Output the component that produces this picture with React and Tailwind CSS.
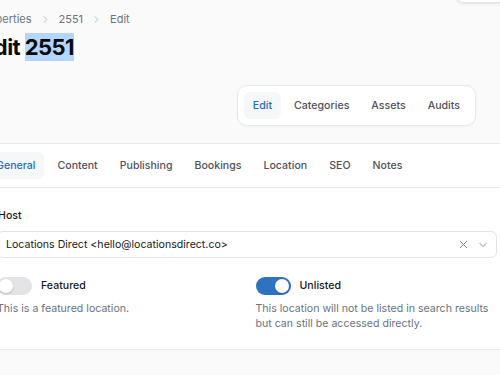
import { X, ChevronDown, ChevronRight } from 'lucide-react';

const subnav = ['Edit', 'Categories', 'Assets', 'Audits'];
const tabs = ['General', 'Content', 'Publishing', 'Bookings', 'Location', 'SEO', 'Notes'];

function Toggle({ on }) {
    return (
        <span
            className={
                on
                    ? 'flex h-[18px] w-[35px] shrink-0 items-center justify-end rounded-full bg-[#2f72bf] px-[2px]'
                    : 'flex h-[18px] w-[35px] shrink-0 items-center justify-start rounded-full bg-[#e4e4e7] px-[2px]'
            }
        >
            <span className="h-[14px] w-[14px] rounded-full bg-white shadow-[0_1px_2px_rgba(0,0,0,0.2)]" />
        </span>
    );
}

function Pill({ label, active }) {
    return (
        <span
            className={
                active
                    ? 'flex h-[27px] items-center rounded-md bg-[#f6f7f9] px-[9px] font-medium text-[#1f6cc0]'
                    : 'flex h-[27px] items-center rounded-md px-[9px] font-medium text-[#52525b]'
            }
        >
            {label}
        </span>
    );
}

export default function App() {
    return (
        <div className="relative h-[375px] w-[500px] overflow-hidden bg-[#fafafa] font-['Inter',sans-serif] text-[10.6px] text-[#18181b]">
            {/* user menu peeking in from the top */}
            <div className="absolute right-[-6px] top-[-41px] h-[43px] w-[50px] rounded-lg bg-white shadow-[0_1px_4px_rgba(0,0,0,0.15)]" />

            <div className="ml-[-22px] pt-[11px]">
                <nav className="flex h-4 items-center gap-[8px] text-[11px] text-[#6b7280]">
                    <span>Properties</span>
                    <ChevronRight size={11} strokeWidth={1.6} className="text-[#9ca3af]" />
                    <span>2551</span>
                    <ChevronRight size={11} strokeWidth={1.6} className="text-[#9ca3af]" />
                    <span>Edit</span>
                </nav>
                <h1 className="ml-[3px] mt-[6px] text-[22px] font-bold leading-[28px] tracking-tight text-[#0a0a0a]">
                    Edit <span className="bg-[#b4d5fe] py-[1px]">2551</span>
                </h1>
            </div>

            <div className="mt-[24px] flex justify-end pr-[24px]">
                <div className="flex gap-1 rounded-[10px] border border-[#e5e7eb] bg-white p-[6px] shadow-[0_1px_2px_rgba(0,0,0,0.03)]">
                    {subnav.map((s, i) => (
                        <Pill key={s} label={s} active={i === 0} />
                    ))}
                </div>
            </div>

            <section className="ml-[-40px] mr-[-24px] mt-[17px] border-y border-[#ebebeb] bg-white">
                <div className="flex gap-1 border-b border-[#e8e8e8] py-[8px] pl-[27px]">
                    {tabs.map((t, i) => (
                        <Pill key={t} label={t} active={i === 0} />
                    ))}
                </div>

                <div className="pb-[18px] pl-[37px] pr-[27px] pt-[20px]">
                    <label className="block h-4 pl-[1px] font-medium leading-4">Host</label>
                    <div className="mt-[7px] flex h-[27px] items-center rounded-md border border-[#e4e4e7] bg-white pl-[8px] pr-[7px]">
                        <span className="flex-1 truncate">Locations Direct &lt;hello@locationsdirect.co&gt;</span>
                        <X size={13} strokeWidth={1.6} className="text-[#71717a]" />
                        <ChevronDown size={12} strokeWidth={1.6} className="ml-[7px] text-[#71717a]" />
                    </div>

                    <div className="mt-[18px] grid grid-cols-2 gap-x-[17px]">
                        <div>
                            <div className="flex h-5 items-center gap-[9px]">
                                <Toggle on={false} />
                                <span className="font-medium">Featured</span>
                            </div>
                            <p className="mt-[5px] leading-[15px] text-[#6b7280]">This is a featured location.</p>
                        </div>
                        <div>
                            <div className="flex h-5 items-center gap-[9px]">
                                <Toggle on />
                                <span className="font-medium">Unlisted</span>
                            </div>
                            <p className="mt-[5px] leading-[15px] text-[#6b7280]">
                                This location will not be listed in search results but can still be accessed directly.
                            </p>
                        </div>
                    </div>
                </div>
            </section>
        </div>
    );
}
